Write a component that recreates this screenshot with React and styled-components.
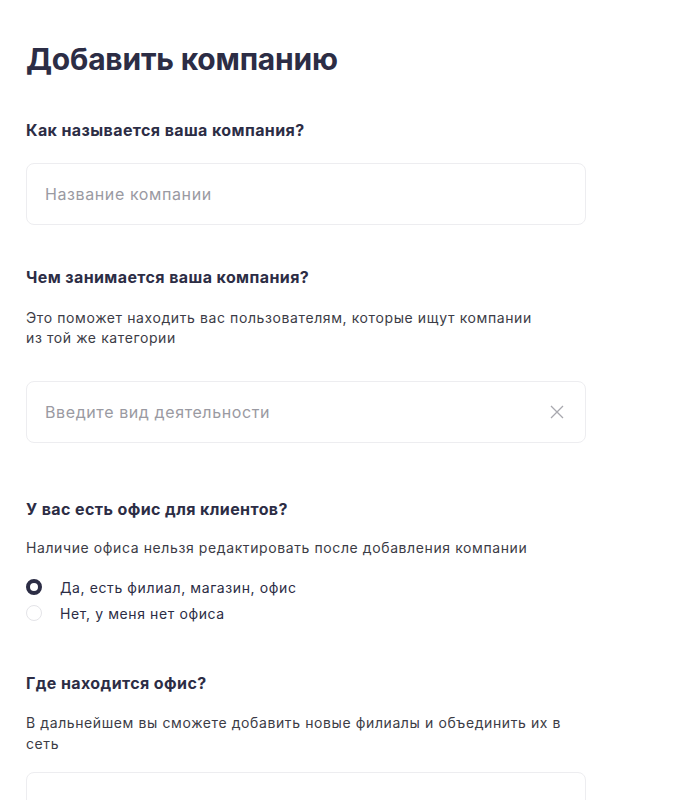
import React, { useState } from "react";
import styled, { createGlobalStyle } from "styled-components";

const GlobalStyle = createGlobalStyle`
    body {
        margin: 0;
        background: #fff;
        font-family: "Inter", "Noto Sans", sans-serif;
        -webkit-font-smoothing: antialiased;
    }
`;

const Page = styled.div`
    width: 560px;
    padding: 39px 0 0 26px;
    display: flex;
    flex-direction: column;
`;

const Title = styled.h1`
    margin: 0;
    font-size: 30px;
    line-height: 40px;
    font-weight: 700;
    color: #2c2d45;
    letter-spacing: -0.2px;
`;

const Section = styled.section`
    display: flex;
    flex-direction: column;
    margin-top: ${(p) => p.$top}px;
`;

const Label = styled.div`
    font-size: 16px;
    line-height: 20px;
    font-weight: 700;
    letter-spacing: 0.4px;
    color: #2c2d45;
`;

const Help = styled.p`
    margin: ${(p) => p.$gap}px 0 0;
    font-size: 14px;
    line-height: ${(p) => p.$lh || 20}px;
    letter-spacing: 0.6px;
    color: #3c3c46;
`;

const Field = styled.div`
    margin-top: ${(p) => p.$gap}px;
    height: 62px;
    box-sizing: border-box;
    border: 1px solid #ededf0;
    border-radius: 8px;
    display: flex;
    align-items: center;
    padding: 0 16px;
`;

const Input = styled.input`
    flex: 1;
    border: none;
    outline: none;
    background: transparent;
    font-family: inherit;
    font-size: 16px;
    letter-spacing: 0.6px;
    color: #2c2d45;

    &::placeholder {
        color: #9a9aa2;
    }
`;

const Clear = styled.button`
    border: none;
    background: none;
    padding: 0;
    margin-right: 4px;
    display: flex;
    color: #a8a8ae;
    cursor: pointer;
`;

const Radios = styled.div`
    margin-top: 17px;
    display: flex;
    flex-direction: column;
    gap: 2px;
`;

const RadioRow = styled.label`
    display: flex;
    align-items: center;
    gap: 18px;
    height: 24px;
    font-size: 14px;
    letter-spacing: 0.6px;
    color: #2c2d45;
    cursor: pointer;
`;

const Dot = styled.span`
    width: 16px;
    height: 16px;
    box-sizing: border-box;
    border-radius: 50%;
    border: ${(p) => (p.$on ? "4.5px solid #2c2d45" : "1px solid #e4e4e8")};
    flex-shrink: 0;
`;

function App() {
    const [office, setOffice] = useState("yes");

    return (
        <>
            <GlobalStyle />
            <Page>
                <Title>Добавить компанию</Title>

                <Section $top={41}>
                    <Label>Как называется ваша компания?</Label>
                    <Field $gap={23}>
                        <Input placeholder="Название компании" />
                    </Field>
                </Section>

                <Section $top={42}>
                    <Label>Чем занимается ваша компания?</Label>
                    <Help $gap={21}>
                        Это поможет находить вас пользователям, которые ищут компании
                        <br />
                        из той же категории
                    </Help>
                    <Field $gap={33}>
                        <Input placeholder="Введите вид деятельности" />
                        <Clear aria-label="Очистить">
                            <svg width="16" height="16" viewBox="0 0 16 16" fill="none" stroke="currentColor" strokeWidth="1.3">
                                <path d="M2 2L14 14M14 2L2 14" />
                            </svg>
                        </Clear>
                    </Field>
                </Section>

                <Section $top={56}>
                    <Label>У вас есть офис для клиентов?</Label>
                    <Help $gap={19}>Наличие офиса нельзя редактировать после добавления компании</Help>
                    <Radios>
                        <RadioRow onClick={() => setOffice("yes")}>
                            <Dot $on={office === "yes"} />
                            Да, есть филиал, магазин, офис
                        </RadioRow>
                        <RadioRow onClick={() => setOffice("no")}>
                            <Dot $on={office === "no"} />
                            Нет, у меня нет офиса
                        </RadioRow>
                    </Radios>
                </Section>

                <Section $top={48}>
                    <Label>Где находится офис?</Label>
                    <Help $gap={19} $lh={21}>
                        В дальнейшем вы сможете добавить новые филиалы и объединить их в сеть
                    </Help>
                    <Field $gap={18}>
                        <Input />
                    </Field>
                </Section>
            </Page>
        </>
    );
}

export default App;
